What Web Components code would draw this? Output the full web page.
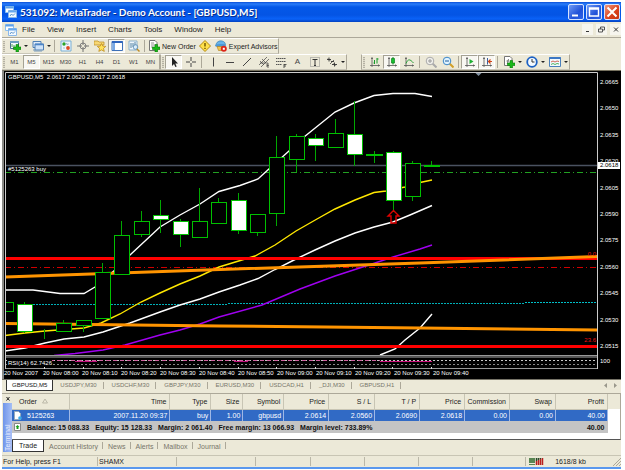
<!DOCTYPE html>
<html lang="en">
<head>
<meta charset="utf-8">
<title>MetaTrader - Demo Account</title>
<style>
  html, body { margin: 0; height: 100%; background: #fff; }
  body { font: 7px/9px "Liberation Sans", Arial, sans-serif; color: #222; }
</style>
</head>
<body>
<trader-window></trader-window>
<script>
const BASE = `<style>
  :host { display: block; box-sizing: border-box; }
  * { box-sizing: border-box; }
  button { font: inherit; color: inherit; border: 0; padding: 0; margin: 0; background: none; white-space: nowrap; }
  svg { display: block; }
</style>`;

function define(name, html, setup) {
  const template = document.createElement('template');
  template.innerHTML = BASE + html;
  customElements.define(name, class extends HTMLElement {
    constructor() {
      super();
      this.attachShadow({ mode: 'open' }).append(template.content.cloneNode(true));
    }
    connectedCallback() { if (setup) setup(this.shadowRoot, this); }
  });
}

const PLUS = '<path d="M7 4.500h2.500V7H12v2.500H9.500V12H7V9.500H4.500V7H7z" fill="#18b818" stroke="#087808" stroke-width=".6"/>';
const AXES = '<path d="M3 1v10M1 9.500h10M2 2.500h2M9.500 8.500v2" fill="none" stroke="#555" stroke-width=".8"/>';
const ICONS = {
  newchart: '<path d="M1.500 1.500h8v7h-8z" fill="#f4faff" stroke="#47708c"/><path d="M1 2h9" stroke="#6f9fc0" stroke-width="2"/><path d="M3 7V4M5 7V5" stroke="#2a8a2a" stroke-width=".8"/>' + PLUS,
  profiles: '<path d="M1 1.500h8v6H1z" fill="#dcebfa" stroke="#5080b4"/><path d="M3 4h8.500v6H3z" fill="#cfe3f8" stroke="#5080b4"/><path d="M3 4.500h8.500" stroke="#4d86c8" stroke-width="1.600"/><path d="M2 9v2h8" fill="none" stroke="#7a9cbc"/>',
  market: '<path d="M1 1h10v10H1z" fill="#eef6fc" stroke="#7ab0d6"/><circle cx="4" cy="4" r="1.700" fill="#28a428"/><circle cx="8" cy="8" r="1.900" fill="#e04820"/><path d="M6 4h3M3 8h2M6 3l2 2" stroke="#90a8ba" stroke-width=".7"/>',
  target: '<circle cx="6" cy="6" r="3" fill="none" stroke="#777" stroke-width=".9"/><path d="M6 0v5M6 7v5M0 6h5M7 6h5" stroke="#666" stroke-width=".9"/>',
  star: '<path d="M0 2.500V1h4l1 1h5v3H0z" fill="#f7d774" stroke="#b78b20" stroke-width=".7"/><path d="M7.500 3.500l1.300 2.600 3 .3-2.300 2 .8 3-2.800-1.500-2.700 1.500.7-3-2.200-2 2.900-.3z" fill="#ffe25a" stroke="#b98212" stroke-width=".7"/>',
  panel: '<path d="M1 1.500h10.500v9H1z" fill="#fff" stroke="#3d70b8"/><path d="M1 2h10.500" stroke="#2f65bd" stroke-width="2"/><path d="M1.500 3h2.500v7H1.500z" fill="#78a8e4"/>',
  tester: '<path d="M1 1h8v9H1z" fill="#eff6fc" stroke="#8ab0cc"/><path d="M3 8V3M5 7V3M7 6V2" stroke="#5484a4"/><circle cx="7.500" cy="7" r="2.300" fill="#d6ecfb" fill-opacity=".8" stroke="#5588b0" stroke-width=".8"/><path d="M9 9l2.500 2.500" stroke="#bb8c28" stroke-width="1.500"/>',
  order: '<path d="M1.500.5h5.500l2 2v8H1.500z" fill="#fff" stroke="#777"/><path d="M3 3h3M3 5h4M3 7h2" stroke="#777" stroke-width=".8"/>' + PLUS,
  diamond: '<path d="M6 .5L11.500 6 6 11.500.5 6z" fill="#ffe14a" stroke="#b58a10"/><path d="M6 3v3.500M6 7.800v1.300" stroke="#6d5300" stroke-width="1.400"/>',
  expert: '<path d="M1 5.500c0-6 9-6 9.500-1z" fill="#67b3ea" stroke="#3378a8" stroke-width=".6"/><ellipse cx="5.500" cy="5.500" rx="5.500" ry="1.500" fill="#4c98d5"/><path d="M2 6.500h7l-1 4H3.500z" fill="#f2c64e" stroke="#ac7a18" stroke-width=".6"/><circle cx="8.800" cy="8.800" r="3" fill="#dd2418"/><path d="M7.800 7.800h2v2h-2z" fill="#fff"/>',
  cursor: '<path d="M4 1v9l2-2 1.400 3 1.300-.6L7.300 7.500H10z" fill="#222"/>',
  cross: '<path d="M6 1v4M6 7v4M1 6h4M7 6h4" stroke="#444"/>',
  vline: '<path d="M6.500 1.500v9" stroke="#444"/>',
  hline: '<path d="M2 6.500h8" stroke="#444"/>',
  trend: '<path d="M2 10l8-8" stroke="#444"/>',
  channel: '<path d="M1 9l8-8M3 11l8-8M2 5l4 4M4 3l4 4M2 7h8" stroke="#444" stroke-width=".7"/><path d="M9 8h2M9 9.500h2M9 11h2M9 8v3" stroke="#333" stroke-width=".7"/>',
  fibo: '<path d="M1 2.500h10M1 5.500h10M1 8.500h6" stroke="#555" stroke-dasharray="1.500 .5"/><path d="M9 8v4M9 8.500h2.500M9 10h2" stroke="#333" stroke-width=".8"/>',
  label: '<path d="M1.500 1.500h9v9h-9z" fill="none" stroke="#888" stroke-dasharray="1 1"/><path d="M3.500 3.500h5M6 3.500v6M5 9.500h2" stroke="#333"/>',
  arrows: '<path d="M1 3.500h4M3 1.500v4M5 5.500h3M6 8.500h5M8.500 6.500v4" stroke="#333" stroke-width=".9"/><path d="M2 2.500l2 2M7.500 7.500l2 2M4 8l4-4" stroke="#333" stroke-width=".7"/>',
  bars: AXES + '<path d="M5.500 4v4M8 2v5.500M8 3h1.500M4.500 7h1" stroke="#169a28"/>',
  candles: AXES + '<path d="M7 1v7.500" stroke="#108020"/><path d="M5.500 2.500h3v4.500h-3z" fill="#14c030" stroke="#108020" stroke-width=".7"/>',
  line: AXES + '<path d="M3 7.500C5 2.500 7 3 10.500 7" fill="none" stroke="#28a038"/>',
  zoomin: '<path d="M7.500 7.500l4 4" stroke="#aaa" stroke-width="2"/><circle cx="5" cy="5" r="3.800" fill="#f0f0ec" stroke="#aaa"/><path d="M3 5h4M5 3v4" stroke="#999"/>',
  zoomout: '<path d="M7.500 7.500l4 4" stroke="#d2a028" stroke-width="2"/><circle cx="5" cy="5" r="3.800" fill="#e0f3ff" stroke="#3b86c8"/><path d="M3 5h4" stroke="#1d5c9c"/>',
  scroll: AXES + '<path d="M5.500 3L9.500 5.500l-4 2.500z" fill="#1fb034"/>',
  shift: AXES + '<path d="M6.500 2v6.500" stroke="#3a5fa0"/><path d="M11 5.500H8M9.500 3.500l-2 2 2 2" fill="none" stroke="#d04418" stroke-width="1.200"/>',
  indicator: '<path d="M1.500.5h5.500l2 2v7H1.500z" fill="#fff" stroke="#777"/><path d="M4 8c1 0 .5-5 2-5M3.500 5h2.500" fill="none" stroke="#555" stroke-width=".8"/>' + PLUS,
  clock: '<circle cx="6" cy="6" r="4.800" fill="#f4faff" stroke="#1d62c4" stroke-width="1.800"/><path d="M6 3v3h2.500" fill="none" stroke="#333"/>',
  template: '<path d="M.5 1.500h11v9H.5z" fill="#f2f9ff" stroke="#4a80bc"/><path d="M.5 2h11" stroke="#3d78c4" stroke-width="2"/><path d="M2 6l2-1 2 1 2-1 2 .5" fill="none" stroke="#c84028" stroke-width=".8"/><path d="M2 8.500l2-1 2 1 2-1 2 .5" fill="none" stroke="#28a038" stroke-width=".8"/>',
  app: '<path d="M.5.5h8v6h-8z" fill="#fff" stroke="#8cc0f0"/><path d="M.5 1.500h8" stroke="#5ea0e8" stroke-width="2"/><path d="M3.500 4.500h8v7h-8z" fill="#f4faff" stroke="#8cb8e8"/><path d="M3.500 5.500h8" stroke="#68a8ec" stroke-width="2"/><path d="M5 10l1.500-2 1.500 1.500L10 7.500" fill="none" stroke="#3a7cc0" stroke-width=".8"/>'
};
const icon = (n, s = 12) => `<svg width="${s}" height="${s}" viewBox="0 0 12 12" aria-hidden="true">${ICONS[n]}</svg>`;

define('app-icon', `<style>:host { display: inline-block; flex: none; }</style><span></span>`, (root, host) => {
  root.querySelector('span').innerHTML = icon(host.getAttribute('name'), host.getAttribute('size') || 12);
});

define('tool-button', `<style>
  :host { flex: none; }
  button { display: flex; align-items: center; justify-content: center; gap: 2px; min-width: 17px; height: 14px; border: 1px solid transparent; }
  :host([pressed]) button { background: #f8f7f2; border-color: #a5a294 #fff #fff #a5a294; }
  :host([drop]) button { width: 23px; gap: 3px; justify-content: flex-start; padding-left: 2px; }
  :host([drop]) button::after { content: ""; border: 2px solid transparent; border-top-color: #222; border-bottom: 0; }
</style><button><slot></slot></button>`, (root, host) => {
  const b = root.querySelector('button');
  if (host.hasAttribute('label')) b.setAttribute('aria-label', host.getAttribute('label'));
  if (host.hasAttribute('pressed')) b.setAttribute('aria-pressed', 'true');
});

define('tool-group', `<style>
  :host { display: flex; align-items: center; height: 16px; border: 1px solid; border-color: #fff #aca899 #c9c6b8 #f8f7f0; border-left: 0; }
  :host([wall]) { border-left: 1px solid #aca899; }
  i { width: 2px; height: 11px; margin: 0 1px; background: repeating-linear-gradient(#b5b2a4 0 1px, #dedaca 1px 2px); flex: none; }
</style><i></i><slot></slot>`);

define('tool-sep', `<style>:host { width: 1px; height: 12px; margin: 0 2px; background: #aca899; flex: none; }</style>`);

define('title-bar', `<style>
  :host { display: flex; align-items: center; height: 20px; padding: 0 1px 0 3px; gap: 3px; color: #fff;
    background: linear-gradient(#0a4fd8 0, #2a7cf8 2px, #0458e8 5px, #0454e4 13px, #0a62f8 17px, #0342c0 20px); }
  h1 { flex: 1; margin: 0; font: bold 10px/14px Lato, "Liberation Sans", sans-serif; white-space: nowrap; text-shadow: 1px 1px #0a2f8c; }
  nav { display: flex; gap: 2px; }
  button { width: 16px; height: 16px; border: 1px solid #d6e4ff; border-radius: 2px; background: linear-gradient(135deg, #6f9bf6, #2152d8 60%, #2c63e8); }
  .close { background: linear-gradient(135deg, #f0987c, #d8401c 60%, #c83410); }
</style>
<app-icon name="app"></app-icon><h1>531092: MetaTrader - Demo Account - [GBPUSD,M5]</h1>
<nav>
<button aria-label="Minimize"><svg width="14" height="14"><path d="M3 10.500h6" stroke="#fff" stroke-width="2"/></svg></button>
<button aria-label="Maximize"><svg width="14" height="14"><path d="M2.500 3h9v8h-9zM2.500 4h9" fill="none" stroke="#fff" stroke-width="1.400"/></svg></button>
<button class="close" aria-label="Close"><svg width="14" height="14"><path d="M2.500 2.500l9 9M11.500 2.500l-9 9" stroke="#fff" stroke-width="2"/></svg></button>
</nav>`);

define('menu-bar', `<style>
  :host { display: flex; align-items: center; height: 16px; padding-left: 3px; border-bottom: 1px solid #aca899; font-size: 8px; line-height: 10px; }
  .items { display: flex; flex: 1; gap: 12px; padding-left: 5px; }
  .win { display: flex; gap: 3px; }
  .win button { width: 11px; height: 11px; background: #f6f5ee; }
</style>
<app-icon name="app"></app-icon>
<div class="items"><button>File</button><button>View</button><button>Insert</button><button>Charts</button><button>Tools</button><button>Window</button><button>Help</button></div>
<div class="win">
<button aria-label="Minimize chart"><svg width="11" height="11"><path d="M4 7.500h3" stroke="#333"/></svg></button>
<button aria-label="Restore chart"><svg width="11" height="11"><path d="M2.500 5h4v3h-4zM4.500 5V3h4v3H7" fill="none" stroke="#555"/></svg></button>
<button aria-label="Close chart"><svg width="11" height="11"><path d="M4 3.500l4 4M8 3.500l-4 4" stroke="#333"/></svg></button>
</div>`);

define('main-toolbar', `<style>
  :host { display: flex; height: 16px; }
</style>
<tool-group>
<tool-button drop label="New chart"><app-icon name="newchart"></app-icon></tool-button>
<tool-button drop label="Profiles"><app-icon name="profiles"></app-icon></tool-button>
<tool-sep></tool-sep>
<tool-button label="Market Watch"><app-icon name="market"></app-icon></tool-button>
<tool-button label="Data Window"><app-icon name="target"></app-icon></tool-button>
<tool-button label="Navigator"><app-icon name="star"></app-icon></tool-button>
<tool-button pressed label="Terminal"><app-icon name="panel"></app-icon></tool-button>
<tool-button label="Strategy Tester"><app-icon name="tester"></app-icon></tool-button>
<tool-sep></tool-sep>
<tool-button><app-icon name="order"></app-icon>New Order</tool-button>
<tool-button label="MetaEditor"><app-icon name="diamond"></app-icon></tool-button>
<tool-button><app-icon name="expert"></app-icon>Expert Advisors</tool-button>
</tool-group>`);

define('chart-toolbar', `<style>
  :host { display: flex; height: 16px; font-size: 6px; color: #444; }
  .gap { width: 14px; }
  b { font: 8px/10px "Liberation Sans", sans-serif; }
</style>
<tool-group id="tf"></tool-group>
<tool-group wall>
<tool-button pressed label="Cursor"><app-icon name="cursor"></app-icon></tool-button>
<tool-button label="Crosshair"><app-icon name="cross"></app-icon></tool-button>
<tool-sep></tool-sep>
<tool-button label="Vertical line"><app-icon name="vline"></app-icon></tool-button>
<tool-button label="Horizontal line"><app-icon name="hline"></app-icon></tool-button>
<tool-button label="Trendline"><app-icon name="trend"></app-icon></tool-button>
<tool-button label="Channel"><app-icon name="channel"></app-icon></tool-button>
<tool-button label="Fibonacci"><app-icon name="fibo"></app-icon></tool-button>
<tool-button><b>A</b></tool-button>
<tool-button label="Text label"><app-icon name="label"></app-icon></tool-button>
<tool-button drop label="Arrows"><app-icon name="arrows"></app-icon></tool-button>
</tool-group>
<div class="gap"></div>
<tool-group wall>
<tool-button label="Bar chart"><app-icon name="bars"></app-icon></tool-button>
<tool-button pressed label="Candlesticks"><app-icon name="candles"></app-icon></tool-button>
<tool-button label="Line chart"><app-icon name="line"></app-icon></tool-button>
<tool-sep></tool-sep>
<tool-button label="Zoom in"><app-icon name="zoomin"></app-icon></tool-button>
<tool-button label="Zoom out"><app-icon name="zoomout"></app-icon></tool-button>
<tool-sep></tool-sep>
<tool-button pressed label="Auto scroll"><app-icon name="scroll"></app-icon></tool-button>
<tool-button pressed label="Chart shift"><app-icon name="shift"></app-icon></tool-button>
<tool-sep></tool-sep>
<tool-button drop label="Indicators"><app-icon name="indicator"></app-icon></tool-button>
<tool-button drop label="Periods"><app-icon name="clock"></app-icon></tool-button>
<tool-button drop label="Templates"><app-icon name="template"></app-icon></tool-button>
</tool-group>`, root => {
  root.getElementById('tf').innerHTML = ['M1', 'M5', 'M15', 'M30', 'H1', 'H4', 'D1', 'W1', 'MN']
    .map(t => `<tool-button${t === 'M5' ? ' pressed' : ''}>${t}</tool-button>`).join('');
});

/* left, right, body top, body bottom, wick top, wick bottom, filled */
const CANDLES = [
  [5, 13, 302, 311, 302, 311, 0], [17, 32, 304, 331, 302, 332, 1], [37, 52, 329, 329, 329, 338, 0],
  [56, 71, 323, 331, 320, 331, 0], [76, 91, 320, 325, 320, 331, 0], [95, 110, 272, 318, 263, 318, 0],
  [114, 129, 235, 274, 221, 274, 0], [134, 149, 221, 234, 211, 236, 0], [153, 168, 215, 219, 200, 232, 1],
  [173, 188, 221, 234, 219, 246, 1], [192, 207, 221, 237, 188, 237, 0], [211, 226, 202, 223, 198, 223, 0],
  [231, 246, 200, 230, 193, 233, 1], [250, 265, 214, 232, 214, 235, 0], [269, 284, 157, 213, 136, 225, 0],
  [289, 304, 136, 159, 134, 171, 0], [308, 323, 138, 145, 134, 160, 1], [328, 343, 133, 147, 119, 147, 0],
  [347, 362, 134, 154, 101, 165, 1], [366, 382, 154, 155, 151, 162, 0], [386, 401, 152, 200, 151, 211, 1],
  [405, 420, 163, 196, 161, 200, 0], [424, 439, 165, 166, 161, 166, 0]
];
define('price-chart', `<style>
  :host { display: grid; grid-template-columns: 1fr 23px; grid-template-rows: 1fr 10px; min-height: 0; background: #000; color: #fff; font-size: 6px; line-height: 8px; border-top: 1px solid #77725f; border-left: 2px solid #8a8a86; position: relative; }
  .plot { position: relative; min-height: 0; }
  .plot svg { position: absolute; inset: 0; width: 100%; height: 100%; }
  .plot span, .now, .rsi { position: absolute; white-space: pre; }
  .head { left: 4px; top: 2px; } .buy { left: 4px; top: 94px; } .rsiname { left: 4px; bottom: 2px; background: #000; line-height: 7px; }
  .fib { right: 2px; color: #f01010; }
  .prices { display: flex; flex-direction: column; justify-content: space-between; padding: 7px 0 19px 2px; position: relative; }
  .prices span { display: flex; }
  .prices .now { left: 0; right: 1px; top: 91px; line-height: 7px; padding-left: 2px; background: #fff; color: #000; }
  .rsi { left: 2px; bottom: 4px; }
  .times { grid-column: 1 / 3; display: flex; white-space: nowrap; }
  .times span { width: 39px; flex: none; }
</style>
<div class="plot"><svg preserveAspectRatio="none" viewBox="4 71 594 298" aria-label="GBPUSD M5 candlestick chart"></svg>
<span class="head">GBPUSD,M5  2.0617 2.0620 2.0617 2.0618</span><span class="buy">#5125263 buy</span>
<span class="fib" style="top:60%">0.0</span><span class="fib" style="top:89%">23.6</span>
<span class="rsiname">RSI(14) 62.7426</span></div>
<div class="prices"></div><div class="times"></div>`, root => {
  const line = (pts, c, w = 1.4) => `<polyline points="${pts}" fill="none" stroke="${c}" stroke-width="${w}"/>`;
  const h = (y, c, w = 1, d = '', a = 5, b = 597) => `<path d="M${a} ${y}H${b}" stroke="${c}" stroke-width="${w}" stroke-dasharray="${d}"/>`;
  const bodies = CANDLES.map(([l, r, t, b, wt, wb, f], i) => {
    const m = Math.floor((l + r) / 2) + .5;
    return (i ? `<path d="M${m} ${wt}V${wb + 1}" stroke="#00a800"/>` : '') +
      `<rect x="${l + .5}" y="${t + .5}" width="${r - l}" height="${b - t}" fill="${f ? '#fff' : '#000'}" stroke="#00c000"/>`;
  }).join('');
  let ticks = '';
  for (let i = 0; i < 11; i++) ticks += `<path d="M${Math.round(44 + i * 38.7) + .5} 367v2" stroke="#ddd"/>`;
  root.querySelector('.plot svg').innerHTML =
    h(165.5, '#4a5260', 1.5) + h(172.5, '#22a022', 1, '6 3 1 3') + h(267.5, '#d00000', 1, '6 3 1 3') +
    h(304.5, '#00b0b8', 1, '2 1', 33, 228) + h(303.5, '#00b0b8', 1, '2 1', 228, 525) + h(302.5, '#00c0c8', 1, '2 1', 525, 597) +
    line('5,290 33,290 60,293.5 84,293.5 95,287 115,270 130,255 160,227 180,215 200,204 219,191.5 240,185.5 258,179 270,168 289,151 304,137 335,112 354,103 374,95.5 393,93.5 415,93.5 432,96.5', '#fff') +
    line('5,335.5 25,333 45,331 84,328 101,323 120,314 141,302 160,293 180,284 200,276 219,267 255,256 275,245 296,231 317,219 335,209 355,200 374,192.5 386,191 405,187 420,182.5 432,180', '#ffe800') +
    line('5,351 25,348 45,343 64,339 84,337 103,332 130,323 160,312 180,305 200,299 219,292 240,285 258,278.5 275,269.5 295,259.5 315,250 335,241 355,233 374,227 393,222 410,215 432,205.5', '#fff') +
    line('54,355.5 75,353.5 103,350 125,345 160,335 180,330 200,324 219,317 262,305 300,289 335,276 375,263 393,257 420,249 432,245', '#a000f0') +
    line('380,355 395,349 405,340 420,328 432,314', '#fff') +
    h(258.5, '#f00', 3) + h(346.5, '#f00', 3) +
    line('5,277 220,269.5 420,263 597,256.5', '#ff9400', 3) + line('5,323.5 220,326 420,328 597,330', '#ff9400', 3) +
    bodies +
    '<path d="M393.500 210.500l5.500 5.500h-3v7h-5v-7h-3z" fill="none" stroke="#e00000" stroke-width="1.400"/>' +
    h(355.5, '#999') + h(357, '#555', 2) + h(360.5, '#c8c8c8', 1, '2 2') + h(361.5, '#c0107c', 1, '', 75, 97) + h(360.5, '#d060a0', 1, '4 3', 50, 380) + h(361.5, '#c0107c', 1, '', 234, 248) + h(361.5, '#d0107c', 1, '', 380, 432) +
    h(364.5, '#888', 1, '2 2') + h(368.5, '#999') + ticks +
    '<path d="M475.500 73h6l-3 3z" fill="#8090a0"/><path d="M5.500 369V72.500H597.500V369" fill="none" stroke="#ccc"/>';
  root.querySelector('.prices').innerHTML = ['2.0665', '2.0650', '2.0635', '2.0620', '2.0605', '2.0590', '2.0575', '2.0560', '2.0545', '2.0530', '2.0515']
    .map(p => `<span>${p}</span>`).join('') + '<span class="now">2.0618</span><span class="rsi">100</span>';
  root.querySelector('.times').innerHTML = ['2007', '08:00', '08:10', '08:20', '08:30', '08:40', '08:50', '09:00', '09:10', '09:20', '09:30', '09:40']
    .map(t => `<span>20 Nov ${t}</span>`).join('');
});

define('chart-tabs', `<style>
  :host { display: flex; align-items: center; height: 12px; padding-left: 4px; color: #77756a; border-top: 1px solid #777468; font-size: 6px; }
  .tabs { display: flex; }
  button { height: 11px; padding: 0 7px; border-right: 1px solid transparent; position: relative; }
  button + button::after { content: ""; position: absolute; right: 0; top: 2px; height: 7px; border-right: 1px solid #aca899; }
  .on { background: #fff; color: #111; border: 1px solid #333; border-top: 0; padding: 0 5px; }
  .end { margin-left: auto; }
</style><div class="tabs"></div><svg class="end" width="18" height="8"><path d="M4 1v5L1 3.500zM11 1v5l3-2.500z" fill="#9a988c"/></svg>`, root => {
  root.querySelector('.tabs').innerHTML = ['GBPUSD,M5', 'USDJPY,M30', 'USDCHF,M30', 'GBPJPY,M30', 'EURUSD,M30', 'USDCAD,H1', '_DJI,M30', 'GBPUSD,H1']
    .map((n, i) => `<button${i ? '' : ' class="on"'}>${n}</button>`).join('');
});

define('terminal-panel', `<style>
  :host { display: grid; grid-template-columns: 10px 1fr; height: 60px; border-top: 1px solid #aca899; }
  aside { display: flex; flex-direction: column; align-items: center; padding: 0 0 1px 1px; }
  .x { width: 8px; height: 9px; }
  .side { flex: 1; width: 9px; background: linear-gradient(90deg, #a6bff5, #6f95ea); color: #e8eeff; writing-mode: vertical-rl; transform: rotate(180deg); font-size: 7px; line-height: 9px; padding-top: 1px; }
  .box { display: flex; flex-direction: column; min-width: 0; }
  .grid { height: 46px; border-bottom: 1px solid #555; border-right: 1px solid #aca899; padding-right: 12px; background: linear-gradient(#ece9d8 15px, #fff 15px); }
  table { border-collapse: collapse; table-layout: fixed; width: 100%; }
  th, td { padding: 0 3px 0 0; text-align: right; font-weight: normal; border-right: 1px solid #c8c5b4; white-space: nowrap; }
  th { height: 15px; border-bottom: 1px solid #c8c5b4; }
  td { height: 12px; background: #316ac5; color: #fff; padding-right: 2px; border-color: #9fb8e6; }
  th:first-child, td:first-child { text-align: left; padding-left: 7px; }
  .cell { display: flex; align-items: center; gap: 5px; }
  td:first-child { padding-left: 2px; }
  .sum td { background: #c4c4c4; color: #111; font-weight: bold; border: 0; }
  .sum td + td { padding-right: 3px; }
  .parts { display: flex; gap: 6px; }
  nav { display: flex; height: 12px; color: #77756a; }
  nav button { padding: 0 5px; height: 12px; position: relative; }
  nav button + button::after { content: ""; position: absolute; right: 0; top: 2px; height: 7px; border-right: 1px solid #aca899; }
  nav .on { background: #fff; color: #222; border: 1px solid #333; border-top: 0; padding: 0 6px; }
</style>
<aside><button class="x" aria-label="Close terminal"><svg width="8" height="8"><path d="M2.500 2l3 3.500M5.500 2l-3 3.500" stroke="#222"/></svg></button><div class="side">Terminal</div></aside>
<div class="box"><div class="grid"><table>
<colgroup></colgroup>
<thead><tr><th><span class="cell">Order <svg width="6" height="6"><path d="M.5 5L3 1l2.500 4z" fill="none" stroke="#bbb8a8"/></svg></span></th><th>Time</th><th>Type</th><th>Size</th><th>Symbol</th><th>Price</th><th>S / L</th><th>T / P</th><th>Price</th><th>Commission</th><th>Swap</th><th>Profit</th></tr></thead>
<tbody><tr><td><span class="cell"><svg width="8" height="9"><path d="M.5.5h4l2 2v6h-6z" fill="#fff" stroke="#9ab"/><circle cx="6" cy="7" r="1.800" fill="#38a8e8"/></svg>5125263</span></td><td>2007.11.20 09:37</td><td>buy</td><td>1.00</td><td>gbpusd</td><td>2.0614</td><td>2.0560</td><td>2.0690</td><td>2.0618</td><td>0.00</td><td>0.00</td><td>40.00</td></tr>
<tr class="sum"><td colspan="11"><span class="cell"><svg width="8" height="9"><path d="M.5.5h6v7h-6z" fill="#fff" stroke="#888"/><path d="M3.500 2l2 2h-1v2h-2V4h-1z" fill="#18a018"/></svg><span class="parts"><span>Balance: 15 088.33</span><span>Equity: 15 128.33</span><span>Margin: 2 061.40</span><span>Free margin: 13 066.93</span><span>Margin level: 733.89%</span></span></span></td><td>40.00</td></tr></tbody>
</table></div>
<nav><button class="on">Trade</button><button>Account History</button><button>News</button><button>Alerts</button><button>Mailbox</button><button>Journal</button></nav></div>`, root => {
  root.querySelector('colgroup').innerHTML = [58, 100, 41, 32, 41, 45, 46, 45, 45, 45, 46, 52]
    .map(w => `<col style="width:${w / 596 * 100}%">`).join('');
});

define('status-bar', `<style>
  :host { display: grid; grid-template-columns: 96fr 79fr 79fr 55fr 54fr 54fr 54fr 53fr 95fr; height: 12px; border-top: 1px solid #c8c5b4; align-items: center; }
  span { height: 9px; border-right: 1px solid #bab7a8; padding-left: 1px; white-space: nowrap; display: flex; align-items: center; }
  span:nth-of-type(9) { border: 0; justify-content: space-between; padding-left: 3px; }
</style><span>For Help, press F1</span><span>SHAMX</span><span></span><span></span><span></span><span></span><span></span><span></span>
<span><svg width="15" height="8"><path d="M1 0v7M3 0v7M5 0v7" stroke="#286428" stroke-width="1.500" stroke-dasharray="5 1"/><path d="M7.500 3v4M9.500 2v5M11.500 1v6M13.500 0v7" stroke="#b82020" stroke-width="1.500"/><path d="M7.500 0v3M9.500 0v2M11.500 0v1" stroke="#284828" stroke-width="1.500"/></svg>1618/8 kb<svg width="24" height="8"><path d="M24 0l-8 8M24 3l-5 5M24 6l-2 2" stroke="#aca899"/></svg></span>`);

define('trader-window', `<style>
  :host { display: flex; flex-direction: column; height: 100vh; padding: 2px 4px 1px 2px; }
  main { flex: 1; min-height: 0; display: flex; flex-direction: column; background: #ece9d8; border-bottom: 2px solid #5a98ee; }
  price-chart { flex: 1; }
  terminal-panel { margin: 2px 0; }
</style>
<main><title-bar></title-bar><menu-bar></menu-bar><main-toolbar></main-toolbar><chart-toolbar></chart-toolbar>
<price-chart></price-chart><chart-tabs></chart-tabs><terminal-panel></terminal-panel><status-bar></status-bar></main>`);
</script>
</body>
</html>
